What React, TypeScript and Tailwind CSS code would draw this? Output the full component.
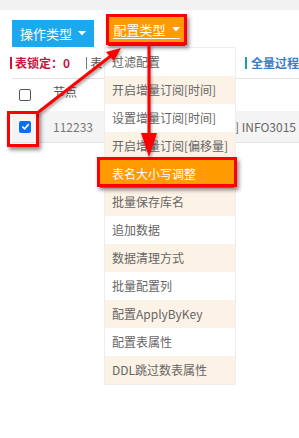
import React from "react";

const menuItems = [
  "过滤配置",
  "开启增量订阅[时间]",
  "设置增量订阅[时间]",
  "开启增量订阅[偏移量]",
  "表名大小写调整",
  "批量保存库名",
  "追加数据",
  "数据清理方式",
  "批量配置列",
  "配置ApplyByKey",
  "配置表属性",
  "DDL跳过数表属性",
];

const font = { fontFamily: '"Microsoft YaHei", "Noto Sans CJK SC", "Noto Sans", sans-serif' };

function Caret() {
  return (
    <svg width="8" height="5" viewBox="0 0 8 5" className="ml-[6px]">
      <path d="M0 0 L8 0 L4 4.5 Z" fill="#fff" />
    </svg>
  );
}

function Checkbox({ checked }: { checked?: boolean }) {
  if (checked) {
    return (
      <span className="flex h-[12px] w-[12px] items-center justify-center rounded-[2px] bg-[#0b6ff2]">
        <svg width="9" height="9" viewBox="0 0 10 10">
          <path d="M1.5 5.2 L4 7.6 L8.6 2.4" stroke="#fff" strokeWidth="1.8" fill="none" />
        </svg>
      </span>
    );
  }
  return <span className="block h-[12px] w-[12px] rounded-[2px] border border-[#555] bg-white" />;
}

export default function App() {
  return (
    <div className="relative h-[438px] w-[299px] overflow-hidden bg-white text-[12px] text-[#666]" style={font}>
      <div className="h-[10px] bg-[#f2f2f2]" />

      {/* toolbar */}
      <div className="flex h-[37px] items-start pl-[12px]">
        <button className="mt-[10px] flex h-[27px] w-[82px] items-center justify-center bg-[#1aa9ef] text-[13px] text-white">
          操作类型
          <Caret />
        </button>
        <button className="ml-[14px] mt-[7px] flex h-[26px] w-[77px] items-center justify-center bg-[#ff9a00] text-[13px] text-white shadow-[0_3px_0_#b86e00]">
          <span className="flex items-center border-b border-white leading-[16px]">
            配置类型
            <Caret />
          </span>
        </button>
      </div>

      {/* stats line */}
      <div className="flex h-[31px] items-center whitespace-nowrap text-[12px]">
        <div className="flex w-[87px] items-center pl-[10px] font-bold text-[#c8163f]">
          <span className="mr-[3px] h-[12px] w-[2px] bg-[#c8163f]" />
          表锁定：0
        </div>
        <div className="flex w-[160px] items-center text-[#555]">
          <span className="mr-[3px] h-[12px] w-[1px] bg-[#777]" />
          表
        </div>
        <div className="flex items-center font-bold text-[#3b7dc6]">
          <span className="mr-[4px] h-[12px] w-[2px] bg-[#16a59b]" />
          全量过程
        </div>
      </div>

      {/* table */}
      <div className="ml-[12px] border-t border-[#e2e2e2]">
        <div className="flex h-[32px] items-center">
          <div className="w-[41px] pl-[7px]">
            <Checkbox />
          </div>
          <span className="-mt-[6px] text-[#555]">节点</span>
        </div>
        <div className="flex h-[32px] items-center border-b border-[#e2e2e2] bg-[#f4f4f4]">
          <div className="w-[41px] pl-[7px]">
            <Checkbox checked />
          </div>
          <span className="w-[180px] text-[#777]">112233</span>
          <span className="ml-[2px] whitespace-nowrap text-[#666]">] INFO3015</span>
        </div>
      </div>

      {/* dropdown menu */}
      <div className="absolute left-[104px] top-[47px] w-[132px] border border-[#eee] bg-white">
        {menuItems.map((item, i) =>
          i === 4 ? (
            <div
              key={item}
              className="-ml-[5px] flex h-[28px] w-[134px] items-center whitespace-nowrap bg-[#ff9a00] pl-[12px] text-white"
            >
              {item}
            </div>
          ) : (
            <div
              key={item}
              className={
                "flex h-[28px] items-center whitespace-nowrap pl-[7px] " +
                (i % 2 === 1 ? "bg-[#fcf2e6]" : "bg-white")
              }
            >
              {item}
            </div>
          )
        )}
      </div>

      {/* red box around highlighted item */}
      <div className="absolute left-[97px] top-[157px] h-[30px] w-[140px] border-[3px] border-[#ff0000] shadow-[2px_3px_4px_rgba(0,0,0,0.45)]" />

      {/* red box around orange button */}
      <div className="absolute left-[106px] top-[14px] h-[31px] w-[81px] border-[3px] border-[#ff0000] shadow-[2px_3px_4px_rgba(0,0,0,0.45)]" />

      {/* red box around checkbox */}
      <div className="absolute left-[7px] top-[111px] h-[36px] w-[32px] border-[3px] border-[#ff0000] shadow-[2px_3px_4px_rgba(0,0,0,0.45)]" />

      {/* arrows */}
      <svg className="pointer-events-none absolute left-0 top-0" width="299" height="438">
        <g style={{ filter: "drop-shadow(1px 2px 1.5px rgba(0,0,0,0.4))" }}>
          <line x1="36" y1="114" x2="112" y2="55" stroke="#ff0000" strokeWidth="3" />
          <polygon points="121,48 114,61 106,52" fill="#ff0000" />
          <line x1="149" y1="45" x2="149" y2="136" stroke="#ff0000" strokeWidth="3" />
          <polygon points="141,133 157,133 149,157" fill="#ff0000" />
        </g>
      </svg>
    </div>
  );
}
